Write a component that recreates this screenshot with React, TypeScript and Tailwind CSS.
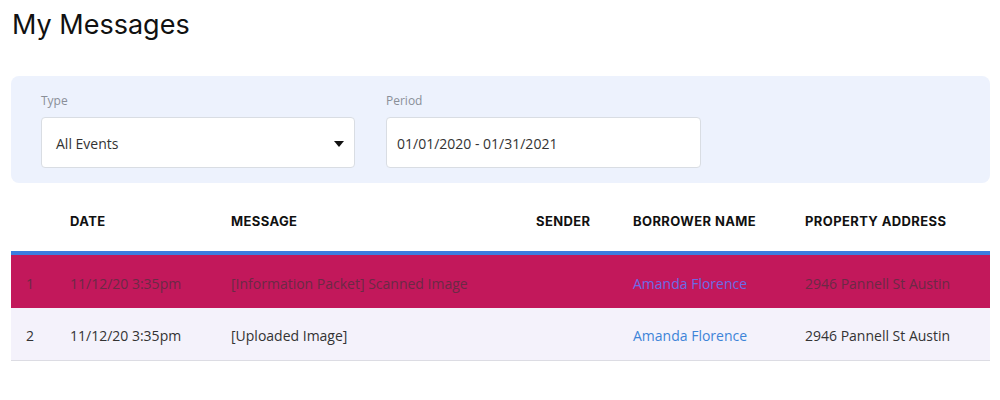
const rows = [
  {
    id: 1,
    date: "11/12/20 3:35pm",
    message: "[Information Packet] Scanned Image",
    sender: "",
    borrower: "Amanda Florence",
    address: "2946 Pannell St Austin",
  },
  {
    id: 2,
    date: "11/12/20 3:35pm",
    message: "[Uploaded Image]",
    sender: "",
    borrower: "Amanda Florence",
    address: "2946 Pannell St Austin",
  },
];

export default function App() {
  return (
    <div className="min-h-[400px] bg-white px-[11px] font-['Open_Sans',sans-serif] text-[#333]">
      <h1 className="pt-[8px] pl-[1px] font-['Inter',sans-serif] text-[27px] leading-[34px] font-normal text-[#111]">
        My Messages
      </h1>

      {/* filters */}
      <div className="mt-[34px] flex h-[107px] w-[979px] gap-[31px] rounded-lg bg-[#edf2fd] px-[30px] pt-[16px]">
        <div className="w-[314px]">
          <div className="text-[12px] leading-[17px] text-[#8a8f98]">Type</div>
          <div className="mt-[8px] flex h-[51px] items-center justify-between rounded border border-[#d9dde3] bg-white pt-[2px] pr-[10px] pl-[14px] text-[14px]">
            <span>All Events</span>
            <svg width="10" height="6" viewBox="0 0 10 6">
              <path d="M0 0h10L5 6z" fill="#111" />
            </svg>
          </div>
        </div>
        <div className="w-[315px]">
          <div className="text-[12px] leading-[17px] text-[#8a8f98]">Period</div>
          <div className="mt-[8px] flex h-[51px] items-center rounded border border-[#d9dde3] bg-white pt-[2px] pl-[10px] text-[14px]">
            01/01/2020 - 01/31/2021
          </div>
        </div>
      </div>

      {/* table */}
      <div className="mt-[16px] w-[979px]">
        <div className="flex h-[52px] items-start pt-[13px] font-['Inter',sans-serif] text-[13px] leading-[18px] font-bold tracking-[0.03em] text-[#111]">
          <div className="w-[59px]" />
          <div className="w-[161px]">DATE</div>
          <div className="w-[305px]">MESSAGE</div>
          <div className="w-[97px]">SENDER</div>
          <div className="w-[172px]">BORROWER NAME</div>
          <div>PROPERTY ADDRESS</div>
        </div>
        <div className="h-[4px] bg-[#3b7de0]" />
        {rows.map((r, i) => (
          <div
            key={r.id}
            className={
              i === 0
                ? "flex h-[53px] items-center bg-[#c2185b] pt-[3px] text-[14px] text-[#6b2a45]"
                : "flex h-[53px] items-center border-b border-[#dcdce3] bg-[#f4f2fb] pt-[3px] text-[14px] text-[#333]"
            }
          >
            <div className="w-[59px] pl-[15px]">{r.id}</div>
            <div className="w-[161px]">{r.date}</div>
            <div className="w-[305px]">{r.message}</div>
            <div className="w-[97px]">{r.sender}</div>
            <div className={i === 0 ? "w-[172px] text-[#6a6ce6]" : "w-[172px] text-[#3d84d8]"}>
              {r.borrower}
            </div>
            <div>{r.address}</div>
          </div>
        ))}
      </div>
    </div>
  );
}
